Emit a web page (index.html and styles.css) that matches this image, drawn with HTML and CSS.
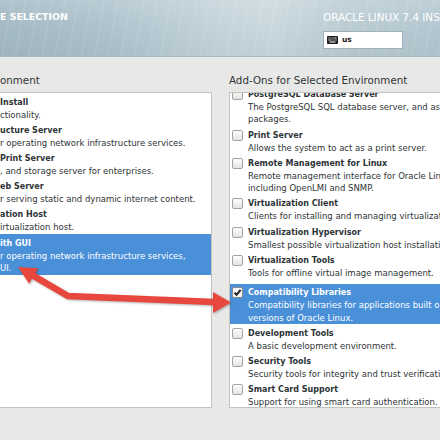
FILE: index.html
```html
<!DOCTYPE html>
<html>
<head>
<meta charset="utf-8">
<link rel="stylesheet" href="styles.css">
</head>
<body>
<div class="window">
  <header class="hdr">
    <div class="hdr-title">E SELECTION</div>
    <div class="hdr-right">
      <div class="product">ORACLE LINUX 7.4 INSTALLATION</div>
      <div class="kbd">
        <svg class="kbd-icon" width="11" height="8" viewBox="0 0 11 8">
          <rect x="0" y="0" width="11" height="8" rx="1" fill="#1e1e1e"/>
          <rect x="1.5" y="1.5" width="1" height="1" fill="#fff"/>
          <rect x="3.5" y="1.5" width="1" height="1" fill="#fff"/>
          <rect x="5.5" y="1.5" width="1" height="1" fill="#fff"/>
          <rect x="7.5" y="1.5" width="2" height="1" fill="#fff"/>
          <rect x="1.5" y="3.5" width="2" height="1" fill="#fff"/>
          <rect x="4.5" y="3.5" width="1" height="1" fill="#fff"/>
          <rect x="6.5" y="3.5" width="1" height="1" fill="#fff"/>
          <rect x="8.5" y="3.5" width="1" height="1" fill="#fff"/>
          <rect x="2.5" y="5.5" width="6" height="1" fill="#fff"/>
        </svg>
        <span class="kbd-text">us</span>
      </div>
    </div>
  </header>

  <main class="cols">
    <section class="col">
      <div class="col-label">onment</div>
      <div class="list list-left">
        <div class="inner inner-left">
          <div class="item"><div class="t">Install</div><div class="d">ctionality.</div></div>
          <div class="item"><div class="t">ucture Server</div><div class="d">r operating network infrastructure services.</div></div>
          <div class="item"><div class="t">Print Server</div><div class="d">, and storage server for enterprises.</div></div>
          <div class="item"><div class="t">eb Server</div><div class="d">r serving static and dynamic internet content.</div></div>
          <div class="item"><div class="t">ation Host</div><div class="d">irtualization host.</div></div>
          <div class="item sel"><div class="t">ith GUI</div><div class="d">r operating network infrastructure services,</div><div class="d">UI.</div></div>
        </div>
      </div>
    </section>

    <section class="col">
      <div class="col-label">Add-Ons for Selected Environment</div>
      <div class="list list-right">
        <div class="inner inner-right">
          <div class="ritem"><span class="cb"></span><div class="txt"><div class="t">PostgreSQL Database Server</div><div class="d">The PostgreSQL SQL database server, and associated</div><div class="d">packages.</div></div></div>
          <div class="ritem"><span class="cb"></span><div class="txt"><div class="t">Print Server</div><div class="d">Allows the system to act as a print server.</div></div></div>
          <div class="ritem"><span class="cb"></span><div class="txt"><div class="t">Remote Management for Linux</div><div class="d">Remote management interface for Oracle Linux,</div><div class="d">including OpenLMI and SNMP.</div></div></div>
          <div class="ritem"><span class="cb"></span><div class="txt"><div class="t">Virtualization Client</div><div class="d">Clients for installing and managing virtualization instances.</div></div></div>
          <div class="ritem"><span class="cb"></span><div class="txt"><div class="t">Virtualization Hypervisor</div><div class="d">Smallest possible virtualization host installation.</div></div></div>
          <div class="ritem"><span class="cb"></span><div class="txt"><div class="t">Virtualization Tools</div><div class="d">Tools for offline virtual image management.</div></div></div>
          <div class="ritem sel"><span class="cb checked"><svg width="9" height="9" viewBox="0 0 9 9"><path d="M1.5 4.6 L3.6 6.8 L7.6 1.8" fill="none" stroke="#1d1f20" stroke-width="2"/></svg></span><div class="txt"><div class="t">Compatibility Libraries</div><div class="d">Compatibility libraries for applications built on previous</div><div class="d">versions of Oracle Linux.</div></div></div>
          <div class="ritem"><span class="cb"></span><div class="txt"><div class="t">Development Tools</div><div class="d">A basic development environment.</div></div></div>
          <div class="ritem"><span class="cb"></span><div class="txt"><div class="t">Security Tools</div><div class="d">Security tools for integrity and trust verification.</div></div></div>
          <div class="ritem"><span class="cb"></span><div class="txt"><div class="t">Smart Card Support</div><div class="d">Support for using smart card authentication.</div></div></div>
        </div>
      </div>
    </section>
  </main>

  <svg class="arrow" width="440" height="440" viewBox="0 0 440 440">
    <polyline points="28,272.6 68,296 214,302" fill="none" stroke="#e8473e" stroke-width="6.5" stroke-linejoin="miter"/>
    <polygon points="18,267 38.1,268.2 29.1,283.8" fill="#e8473e"/>
    <polygon points="231,302.5 213,292 213,313" fill="#e8473e"/>
  </svg>
</div>
</body>
</html>
```

FILE: styles.css
```css
html, body {
  margin: 0;
  padding: 0;
}

body {
  width: 440px;
  height: 440px;
  overflow: hidden;
  background: #e8e8e7;
  font-family: "DejaVu Sans", sans-serif;
  color: #2e3436;
}

.window {
  position: relative;
  width: 440px;
  height: 440px;
  overflow: hidden;
}

/* Header */
.hdr {
  height: 57px;
  display: flex;
  justify-content: space-between;
  box-sizing: border-box;
  border-bottom: 1px solid #a9b9c0;
  background:
    linear-gradient(180deg, rgba(255,255,255,0.16) 0%, rgba(255,255,255,0) 55%, rgba(0,0,0,0.03) 100%),
    repeating-linear-gradient(100deg, rgba(255,255,255,0) 0 11px, rgba(255,255,255,0.07) 11px 13px),
    linear-gradient(90deg, #a2b8c3 0%, #adc2cc 25%, #c3d3da 50%, #c8d7dd 62%, #b9cbd3 78%, #b3c6cf 100%);
}

.hdr-title {
  padding-top: 10.5px;
  font-size: 9.4px;
  line-height: 12px;
  font-weight: bold;
  color: #ffffff;
  white-space: nowrap;
}

.hdr-right {
  width: 117px;
  display: flex;
  flex-direction: column;
  padding-top: 10.7px;
  overflow: hidden;
}

.product {
  font-size: 10.4px;
  line-height: 12px;
  color: #ffffff;
  white-space: nowrap;
}

.kbd {
  margin-top: 8px;
  width: 80px;
  height: 18px;
  box-sizing: border-box;
  background: #ffffff;
  border: 1px solid #9fb0b8;
  display: flex;
  align-items: center;
  gap: 4px;
  padding-left: 3px;
}

.kbd-icon {
  display: block;
}

.kbd-text {
  font-size: 7.5px;
  font-weight: bold;
  color: #222;
}

/* Columns */
.cols {
  display: grid;
  grid-template-columns: 212px 260px;
  column-gap: 17px;
}

.col-label {
  margin: 16px 0 5px;
  font-size: 10.3px;
  line-height: 14px;
  color: #2e3436;
  white-space: nowrap;
}

.list {
  height: 316px;
  box-sizing: border-box;
  background: #ffffff;
  border: 1px solid #c2c2bf;
  overflow: hidden;
}

.list-left {
  border-left: none;
}

.inner-left {
  margin-top: 0.2px;
}

.inner-right {
  margin-top: -7.7px;
}

.t {
  font-size: 8px;
  font-weight: bold;
  line-height: 13px;
  white-space: nowrap;
}

.d {
  font-size: 8.5px;
  line-height: 12.5px;
  white-space: nowrap;
}

.item {
  padding: 2.5px 0 0.2px;
}

.ritem {
  display: flex;
  gap: 5px;
  padding: 2.5px 0 0.2px 2px;
}

.sel {
  background: #4a90d9;
  color: #ffffff;
}

.ritem.sel {
  margin-top: 5px;
  padding-top: 1.9px;
  padding-bottom: 0;
}

.cb {
  flex: none;
  width: 11px;
  height: 11px;
  margin-top: 1px;
  box-sizing: border-box;
  border: 1px solid #a3a3a0;
  border-radius: 2px;
  background: linear-gradient(180deg, #fdfdfd, #e3e3e1);
}

.cb.checked {
  background: #f6f6f6;
  border-color: #8c8c89;
  display: flex;
  align-items: center;
  justify-content: center;
}

.cb.checked svg {
  display: block;
}

/* Annotation arrow */
.arrow {
  position: absolute;
  left: 0;
  top: 0;
  pointer-events: none;
  filter: drop-shadow(1px 1.5px 1px rgba(0,0,0,0.3));
}
```
